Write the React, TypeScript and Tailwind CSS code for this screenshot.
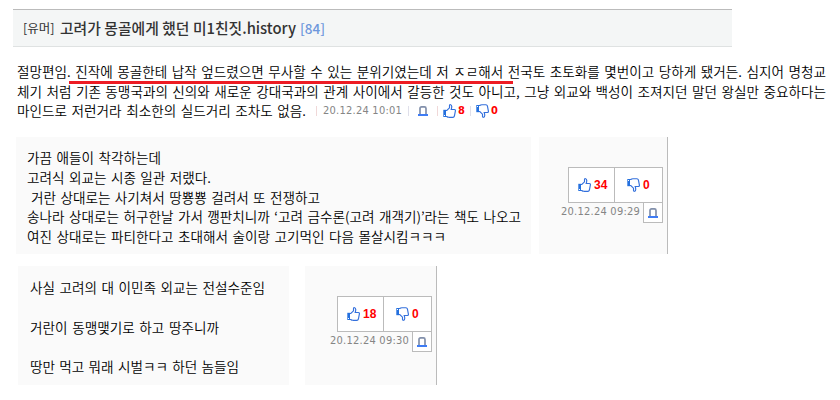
import React from "react";

const KR = "font-['Noto_Sans_CJK_KR',sans-serif]";
const DATE = "font-['DejaVu_Sans_Condensed','DejaVu_Sans',sans-serif] text-[11px] font-normal tracking-[0.24px] text-[#858585] whitespace-nowrap";

function Line({ w, children }: { w: string; children: React.ReactNode }) {
  return <div className={`${w} whitespace-nowrap [text-align-last:justify]`}>{children}</div>;
}

function Thumb({ down = false }: { down?: boolean }) {
  return (
    <svg width="13" height="14" viewBox="0 0 13 14" className={down ? "shrink-0 rotate-180 -scale-x-100" : "shrink-0"} fill="none" stroke="#3470dc">
      <path d="M2.8 6.5 H3.8 L6.5 3.8 V1.5 Q6.6 .6 7.6 .7 Q8.7 .8 8.7 2.4 Q8.8 3.8 8.2 5.5 H11.3 Q12.6 5.6 12.4 6.8 L11.4 12 Q11 13.3 10 13.3 H6 Q4.5 13.2 3.8 12.5 H2.8" fill="#fff" strokeWidth="1.15" />
      <path d="M.3 5.8 H3 V13 H.3 Z" fill="#2470de" stroke="none" />
      <path d="M1 11.5h1" stroke="#fff" />
    </svg>
  );
}

function Bell() {
  return (
    <svg width="10" height="10" viewBox="0 0 10 10" fill="none" className="shrink-0">
      <path d="M2 8V2.5Q2 .9 3.6 .9H6.4Q8 .9 8 2.5V8" stroke="#8290ab" strokeWidth="1.7" />
      <path d="M0 9H10" stroke="#3f7cf4" strokeWidth="2" />
    </svg>
  );
}

function Votes({ up, date }: { up: string; date: string }) {
  return (
    <div className="flex flex-col items-end">
      <div className="flex h-9 w-[95px] border border-[#bbb] bg-white font-['Liberation_Sans',sans-serif] text-[12px] font-bold text-[#f00]">
        <div className="flex w-[46px] items-center gap-[3px] border-r border-[#bbb] pl-[9px]"><Thumb /><span>{up}</span></div>
        <div className="flex flex-1 items-center gap-[3px] pl-3"><Thumb down /><span>0</span></div>
      </div>
      <div className="-mt-px flex">
        <div className={`${DATE} mr-[3px] w-[79px] leading-[20px]`}>{date}</div>
        <div className="flex h-[21px] w-5 items-center justify-center border border-[#bbb] bg-white"><Bell /></div>
      </div>
    </div>
  );
}

export default function App() {
  return (
    <div className={`h-[400px] w-[840px] overflow-hidden bg-white pt-[9px] text-[13.6px] font-[350] text-black ${KR}`}>
      <header className="ml-[13px] flex h-[38px] w-[719px] items-center border-t border-b border-t-[#bbb] border-b-[#dfe2e2] bg-[#f4f6f6] pl-[10px] text-[#333]">
        <div className="w-[33px] text-[12.5px] font-normal whitespace-nowrap [text-align-last:justify]">[유머]</div>
        <h1 className="ml-1 w-[236px] text-[14.8px] font-medium whitespace-nowrap [text-align-last:justify]">고려가 몽골에게 했던 미1친짓.history</h1>
        <span className="ml-[4px] text-[13.5px] font-medium text-[#6d97dc]">[84]</span>
      </header>

      <main>
        <section className="relative ml-[17px] h-[90px] pt-[15px] leading-[19.7px]">
          <Line w="w-[809px]">절망편임. 진작에 몽골한테 납작 엎드렸으면 무사할 수 있는 분위기였는데 저 ㅈㄹ해서 전국토 초토화를 몇번이고 당하게 됐거든. 심지어 명청교</Line>
          <Line w="w-[809px]">체기 처럼 기존 동맹국과의 신의와 새로운 강대국과의 관계 사이에서 갈등한 것도 아니고, 그냥 외교와 백성이 조져지던 말던 왕실만 중요하다는</Line>
          <div className="flex items-center">
            <Line w="w-[289px]">마인드로 저런거라 최소한의 실드거리 조차도 없음.</Line>
            <i className="ml-[10px] h-[10px] w-px bg-[#f0d8d8]" />
            <div className={`${DATE} ml-[6px] w-[79px]`}>20.12.24 10:01</div>
            <i className="ml-[6px] mr-[9px] h-[10px] w-px bg-[#dfdfea]" />
            <Bell />
            <i className="ml-[9px] mr-[5px] h-[10px] w-px bg-[#f0d8d8]" />
            <Thumb />
            <b className="ml-[2px] w-[7px] font-['DejaVu_Sans_Condensed','DejaVu_Sans',sans-serif] text-[11px] font-bold text-[#f00]">8</b>
            <i className="ml-[5px] mr-[5px] h-[10px] w-px bg-[#dfdfea]" />
            <Thumb down />
            <b className="ml-[2px] w-[7px] font-['DejaVu_Sans_Condensed','DejaVu_Sans',sans-serif] text-[11px] font-bold text-[#f00]">0</b>
          </div>
          <div className="absolute top-[34px] left-[52px] h-[3px] w-[444px] bg-[#ed1c24]" />
        </section>

        <section className="ml-4 flex h-[117px] gap-2">
          <div className="w-[515px] bg-[#fafafa] pt-[11px] pl-[11px] leading-[19.8px]">
            <Line w="w-[134px]">가끔 애들이 착각하는데</Line>
            <Line w="w-[184px]">고려식 외교는 시종 일관 저랬다.</Line>
            <div className="pl-1"><Line w="w-[289px]">거란 상대로는 사기쳐서 땅뿅뿅 걸려서 또 전쟁하고</Line></div>
            <Line w="w-[494px]">송나라 상대로는 허구한날 가서 깽판치니까 ‘고려 금수론(고려 개객기)’라는 책도 나오고</Line>
            <Line w="w-[419px]">여진 상대로는 파티한다고 초대해서 술이랑 고기먹인 다음 몰살시킴ㅋㅋㅋ</Line>
          </div>
          <div className="flex w-[129px] justify-end border-r border-[#bbb] bg-[#fafafa] pt-[30px] pr-1">
            <Votes up="34" date="20.12.24 09:29" />
          </div>
        </section>

        <section className="mt-3 ml-[18px] flex h-[119px] gap-4">
          <div className="flex w-[271px] flex-col gap-5 bg-[#fafafa] pt-3 pl-3 leading-[19.6px]">
            <Line w="w-[235px]">사실 고려의 대 이민족 외교는 전설수준임</Line>
            <Line w="w-[189px]">거란이 동맹맺기로 하고 땅주니까</Line>
            <Line w="w-[209px]">땅만 먹고 뭐래 시벌ㅋㅋ 하던 놈들임</Line>
          </div>
          <div className="flex w-[132px] justify-end border-r border-[#bbb] bg-[#fafafa] pt-[30px] pr-1">
            <Votes up="18" date="20.12.24 09:30" />
          </div>
        </section>
      </main>
    </div>
  );
}
